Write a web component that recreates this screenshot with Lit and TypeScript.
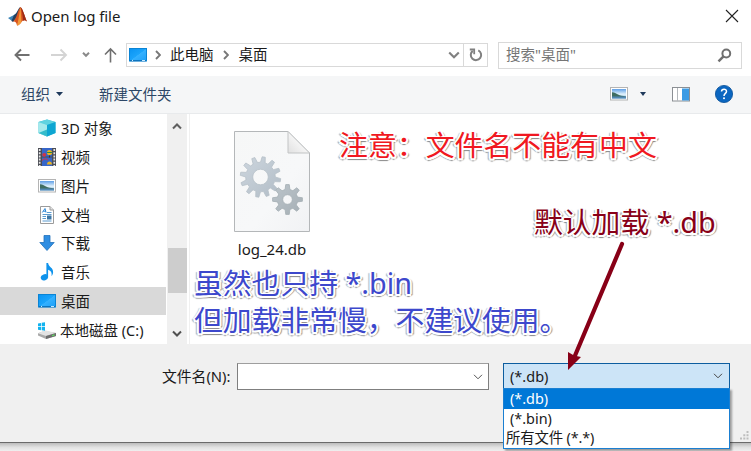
import { LitElement, html, svg, css } from "lit";
import { customElement } from "lit/decorators.js";
import { classMap } from "lit/directives/class-map.js";

/* Outline of a gear wheel with a round hole. */
function gear(cx: number, cy: number, teeth: number, outer: number, inner: number, hole: number, turn = 0): string {
  const pts: string[] = [];
  const step = (Math.PI * 2) / teeth;
  const at = (r: number, a: number) => `${(cx + r * Math.cos(a)).toFixed(2)} ${(cy + r * Math.sin(a)).toFixed(2)}`;
  for (let i = 0; i < teeth; i++) {
    const a = i * step + turn;
    pts.push(at(inner, a - step * 0.3), at(outer, a - step * 0.15), at(outer, a + step * 0.15), at(inner, a + step * 0.3));
  }
  return `M${pts.join("L")}Z M${cx - hole} ${cy}a${hole} ${hole} 0 1 0 ${hole * 2} 0a${hole} ${hole} 0 1 0 ${-hole * 2} 0Z`;
}

const monitor = svg`
  <defs><linearGradient id="mon" x1="0" y1="0" x2="1" y2="1">
    <stop offset="0" stop-color="#0a93f2"/><stop offset=".5" stop-color="#1ba4fb"/><stop offset=".52" stop-color="#35b1ff"/><stop offset="1" stop-color="#1c9ff8"/>
  </linearGradient></defs>
  <rect x=".5" y="2.5" width="17" height="12.500" fill="url(#mon)" stroke="#0b84d4"/>
  <path d="M1 14.700h16" stroke="#0c6db5" stroke-width="1"/><path d="M3 14.500h1M13 14.500h3" stroke="#c5e9ff"/>`;

const picture = svg`
  <defs><linearGradient id="sky" x1="0" y1="0" x2="0" y2="1">
    <stop offset="0" stop-color="#5f9fe6"/><stop offset=".55" stop-color="#e2f2fc"/><stop offset="1" stop-color="#8bbbe0"/>
  </linearGradient></defs>
  <rect x=".5" y="2.5" width="17" height="12.500" fill="#fff" stroke="#b4b4b4"/>
  <rect x="2" y="4" width="14" height="9.500" fill="url(#sky)"/>
  <path d="M2 7.2c2.5 0 4 1.2 6 2.3s5 1.3 8 2v.6H2z" fill="#3f6d62"/>
  <path d="M2 11.500h14v2H2z" fill="#5288b4"/>`;

const icons = {
  cube: svg`
    <path d="M9 .5l8.5 2.6v11L9 17.5.5 14.100V3.100z" fill="#3fc4d8"/>
    <path d="M.5 3.100L9 .5l8.500 2.600L9 6z" fill="#5fd3e0"/>
    <path d="M.5 3.100L9 6v11.500L.5 14.100z" fill="#a5eaec"/>
    <path d="M9 6l8.500-2.900v11L9 17.500z" fill="#0ea6d2"/>
    <path d="M.5 14.100L9 10.500v7z" fill="#35bccb"/>`,
  film: svg`
    <rect x="0" y="0" width="18" height="18" fill="#4b4d55"/>
    <rect x="4" y="0" width="10" height="8.500" fill="#3766c8"/><rect x="4" y="9.500" width="10" height="8.500" fill="#3766c8"/>
    <path d="M1.700 1v17M16.300 1v17" stroke="#e6e6e6" stroke-width="1.700" stroke-dasharray="2 1.200"/>
    <circle cx="11.500" cy="4.500" r="2.600" fill="#e9b320"/><path d="M9 4.500h5" stroke="#2c8b4c"/>
    <circle cx="6.200" cy="6.800" r="1.900" fill="#cf3547"/><path d="M11.500 7.500v2" stroke="#4a2c1c"/>
    <path d="M9 15.500a2.600 2.600 0 0 1 5 0v1H9z" fill="#e9b320"/><path d="M4 12.500l3-2 3 1.500" stroke="#cf3547" fill="none"/>`,
  picture,
  document: svg`
    <path d="M2.500.5h9.500l3.500 3.500v13.500h-13z" fill="#fff" stroke="#9b9b9b"/>
    <path d="M12 .5V4h3.500" fill="#e4e4e4" stroke="#9b9b9b"/>
    <path d="M4.300 6.500L7 2.500l1 4M5.300 5.200h2.500" stroke="#2c86d6" fill="none"/>
    <path d="M9 6.500h4.500M4.500 8.500h9M4.500 10.500h3.500M4.500 12.500h3.500M4.500 15h9" stroke="#5b9bd0"/>
    <rect x="9" y="9.500" width="4.500" height="4" fill="#3c76a5"/>`,
  download: svg`<path d="M6 1.500h6v7h4.200L9 16.500 1.800 8.500H6z" fill="#2f8ee2" stroke="#2272bd" stroke-width=".8"/>`,
  music: svg`
    <ellipse cx="6.400" cy="14.300" rx="3.700" ry="3" fill="#0f93ec" transform="rotate(-18 6.400 14.300)"/>
    <path d="M8.400 0h1.700c.3 4 5.400 4.500 5 9.500-.1 1.500-.8 2.800-1.600 3.600.6-3.100-.3-5.400-3.400-6.300v7.500H8.400z" fill="#0f93ec"/>`,
  monitor,
  drive: svg`
    <path d="M0 12.300L6.500 10l11.500 2v3L8 18 0 14.500z" fill="#a9a9a9"/>
    <path d="M0 12.300L7 9.300l11 2.700-10 2.900z" fill="#e3e3e3"/>
    <path d="M8 14.900l10-2.900v3L8 18z" fill="#6d6d6d"/><path d="M14 14.700l2.500-.8" stroke="#5fdc5f" stroke-width="1.200"/>
    <path d="M0 2.400l3-.5v3.300H0zM3.700 1.800L7 1.200v4H3.700zM0 5.900h3v3.300l-3-.5zM3.700 5.900H7v3.900l-3.300-.5z" fill="#12b3ef"/>`,
};

interface Place { icon: keyof typeof icons; label: string; selected?: boolean }
const places: Place[] = [
  { icon: "cube", label: "3D 对象" },
  { icon: "film", label: "视频" },
  { icon: "picture", label: "图片" },
  { icon: "document", label: "文档" },
  { icon: "download", label: "下载" },
  { icon: "music", label: "音乐" },
  { icon: "monitor", label: "桌面", selected: true },
  { icon: "drive", label: "本地磁盘 (C:)" },
];

const filters = [
  { label: "(*.db)", cls: "current" },
  { label: "(*.bin)", cls: "" },
  { label: "所有文件 (*.*)", cls: "all" },
];

@customElement("app-root")
export class AppRoot extends LitElement {
  static styles = css`
    :host {
      display: block; position: relative; width: 751px; height: 451px; overflow: hidden;
      background: #fff; color: #1a1a1a;
      font: 14.5px/20px "Noto Sans", "Noto Sans CJK SC", sans-serif;
    }
    * { box-sizing: border-box; }
    svg { display: block; flex: none; }
    .window { display: flex; flex-direction: column; height: 443px; border-bottom: 1px solid #6a6a6a; }
    .title { display: flex; align-items: center; height: 34px; padding: 0 12px 2px 8px; }
    .title span { flex: 1; margin-left: 4px; font-size: 15px; letter-spacing: -0.05px; }
    .nav { display: flex; align-items: center; height: 42px; padding: 0 9px 0 14px; }
    .address { display: flex; align-items: center; width: 362px; height: 24px; margin-left: 8px; border: 1px solid #d9d9d9; padding-left: 2px; }
    .address span, .search span { padding-bottom: 2px; }
    .address .sep { margin: 0 9px 0 8px; }
    .address .sep2 { margin: 0 10px 0 9px; }
    .address .fold { margin-left: auto; margin-right: 3px; }
    .refresh { display: flex; align-items: center; justify-content: center; width: 24px; height: 22px; border-left: 1px solid #d9d9d9; }
    .search { display: flex; align-items: center; justify-content: space-between; width: 244px; height: 27px; margin-left: auto; border: 1px solid #d9d9d9; padding: 0 9px 0 7px; color: #757575; }
    .tools { display: flex; align-items: center; height: 38px; padding: 0 18px 1px 21px; background: #f5f6f7; border-bottom: 1px solid #e8eaec; color: #2c4666; }
    .tools .down { margin-left: 6px; }
    .tools .new { margin-left: 36px; flex: 1; }
    .tools .down2 { margin: 0 26px 0 12px; }
    .tools .help { margin-left: 25px; }
    .main { display: flex; height: 230px; }
    .places { width: 166px; display: flex; flex-direction: column; }
    .place { display: flex; align-items: center; flex: 1; padding-left: 38px; gap: 5px; white-space: nowrap; }
    .place.selected { background: #d9d9d9; }
    .place.drive span { margin-left: -1px; }
    .scroll { display: flex; flex-direction: column; align-items: center; width: 20px; margin-left: 1px; background: #f0f0f0; padding: 8px 0 6px; }
    .thumb { width: 19px; height: 45px; margin: auto 0 37px; background: #cdcdcd; }
    .files { flex: 1; margin-left: 2px; border-left: 1px solid #f0f0f0; padding: 17px 0 0 30px; }
    .file { display: flex; flex-direction: column; align-items: center; width: 103px; }
    .file span { margin-top: 7px; font-size: 15px; margin-left: 1px; }
    .footer { display: flex; flex: 1; background: #f0f0f0; padding: 19px 0 0 162px; }
    .footer label { width: 75px; line-height: 27px; white-space: nowrap; font-size: 14.8px; }
    .name { display: flex; align-items: center; justify-content: flex-end; width: 252px; height: 27px; background: #fff; border: 1px solid #7f7f7f; border-top-color: #9e9e9e; padding-right: 5px; }
    .type { position: relative; width: 227px; height: 26px; margin-left: 14px; }
    .value { display: flex; align-items: center; justify-content: space-between; height: 26px; background: #cce4f7; border: 1px solid #0d5d9f; border-bottom: 0; padding: 0 6px 2px 6px; }
    .list { position: absolute; left: 0; top: 25px; width: 227px; height: 61px; background: #fff; border: 1px solid #1a7fd2; box-shadow: 2px 2px 2px rgba(0,0,0,.35); font-size: 14.4px; }
    .option { height: 19.600px; line-height: 20px; padding-left: 6px; }
    .option.current { background: #0078d7; color: #fff; }
    .option.all { padding-left: 2px; line-height: 19px; letter-spacing: -0.15px; }
    .grip { margin: auto 2px 2px auto; }
    .shade { height: 8px; background: linear-gradient(#bcbcbc, #e2e2e2 55%, #efefef); }
    .note { position: absolute; white-space: pre; font-size: 28.8px; line-height: 37px;
      text-shadow: 1px 0 #fff, -1px 0 #fff, 0 1px #fff, 0 -1px #fff, 1.500px 1.500px #fff, -1.500px 1.500px #fff, 2px 0 #fff, -2px 0 #fff, 0 2px #fff,
        2px 2px 1px #888, -2px 2px 1px #999, 0 3px 1px #888, 3px 1px 1px #aaa, -3px 1px 1px #bbb; }
    .red { left: 339px; top: 126px; color: #f01821; font-size: 28.9px; }
    .blue { left: 194px; top: 264px; color: #3d48cc; }
    .wine { left: 534px; top: 203px; color: #880017; }
    .arrow { position: absolute; left: 560px; top: 236px; }
  `;

  render() {
    return html`
      <div class="window">
        <div class="title">
          <svg width="19" height="19" viewBox="0 0 19 19">
            <path d="M0 11l6-3 4-3-4 8-2 1z" fill="#3d86b8"/><path d="M6 8c3-1 4-7 6.500-8L10 9l-5 6-1.500-1z" fill="#25405e"/>
            <path d="M12.500 0C15 2 16.500 9 19 14.500c-2.500-2-4-1.500-5.500.5-1.500 2-3 3.500-4.500 3.500C8.500 15 7 14 5 14.500 9 12 9.500 3 12.500 0z" fill="#d9541e"/>
            <path d="M12.500 0c-1 4-1 9-3.500 18.500 2 0 3.500-2 4.500-3.500z" fill="#f29a3a"/><path d="M12.500 0C15 2 16.500 9 19 14.500c-2-1.500-3-1.500-4-.6C15 9 14 4 12.500 0z" fill="#9c2a17"/>
          </svg>
          <span>Open log file</span>
          <svg width="14" height="14" viewBox="0 0 14 14"><path d="M1 1l12 12M13 1L1 13" stroke="#222" stroke-width="1.100"/></svg>
        </div>

        <div class="nav">
          <svg width="104" height="18" viewBox="0 0 104 18" fill="none">
            <path d="M15.500 9H1.500M7 3.500L1.500 9 7 14.500" stroke="#707070" stroke-width="1.900"/>
            <path d="M37 9h14M46.500 3.500L52 9l-5.500 5.500" stroke="#d4d4d4" stroke-width="1.900"/>
            <path d="M69 6.800l3 3 3-3" stroke="#8a8a8a" stroke-width="2"/>
            <path d="M96.500 16.500V3M91 8.500L96.500 3l5.500 5.500" stroke="#707070" stroke-width="1.600"/>
          </svg>
          <div class="address">
            <svg width="18" height="18" viewBox="0 0 18 18">${monitor}</svg>
            <svg class="sep" width="6" height="10" viewBox="0 0 6 10"><path d="M1 1l4 4-4 4" fill="none" stroke="#777" stroke-width="1.900"/></svg>
            <span>此电脑</span>
            <svg class="sep2" width="6" height="10" viewBox="0 0 6 10"><path d="M1 1l4 4-4 4" fill="none" stroke="#777" stroke-width="1.900"/></svg>
            <span>桌面</span>
            <svg class="fold" width="12" height="8" viewBox="0 0 12 8"><path d="M1.200 1.500L6 6.300l4.800-4.800" fill="none" stroke="#808080" stroke-width="2.100"/></svg>
            <div class="refresh">
              <svg width="14" height="14" viewBox="0 0 14 14" fill="none" stroke="#808080" stroke-width="2"><path d="M9.300 2.300a5.200 5.200 0 1 1-5.600.6"/><path d="M.8 1.500h4.400v4.700" stroke-width="1.800"/></svg>
            </div>
          </div>
          <div class="search">
            <span>搜索"桌面"</span>
            <svg width="15" height="15" viewBox="0 0 15 15" fill="none" stroke="#707070"><circle cx="9.300" cy="5.500" r="3.900" stroke-width="2"/><path d="M6.500 8.300L1.500 13.300" stroke-width="2.400"/></svg>
          </div>
        </div>

        <div class="tools">
          <span>组织</span>
          <svg class="down" width="7" height="4" viewBox="0 0 7 4"><path d="M0 0h7L3.500 4z" fill="#1e395b"/></svg>
          <span class="new">新建文件夹</span>
          <svg width="18" height="18" viewBox="0 0 18 18">${picture}</svg>
          <svg class="down2" width="6" height="4" viewBox="0 0 6 4"><path d="M0 0h6L3 4z" fill="#1e395b"/></svg>
          <svg width="18" height="15" viewBox="0 0 18 15"><rect x=".5" y=".5" width="17" height="13.500" fill="#fff" stroke="#8b8f94"/><path d="M5.500 1v13" stroke="#b4b8bc"/><rect x="10" y="1.500" width="7" height="12" fill="#3c9be4"/></svg>
          <svg class="help" width="18" height="18" viewBox="0 0 18 18"><circle cx="9" cy="9" r="8.600" fill="#0b66c0" stroke="#084f98" stroke-width=".8"/><path d="M6.500 6.500C6.600 3.300 11.600 3.400 11.500 6.500c0 1.900-2.500 2-2.500 4.500" fill="none" stroke="#fff" stroke-width="1.500"/><circle cx="9" cy="13.300" r="1" fill="#fff"/></svg>
        </div>

        <div class="main">
          <div class="places">
            ${places.map((p) => html`
              <div class=${classMap({ place: true, selected: !!p.selected, drive: p.icon === "drive" })}>
                <svg width="18" height="18" viewBox="0 0 18 18">${icons[p.icon]}</svg><span>${p.label}</span>
              </div>`)}
          </div>
          <div class="scroll">
            <svg width="10" height="8" viewBox="0 0 10 8"><path d="M1 6.500l4-4 4 4" fill="none" stroke="#606060" stroke-width="2"/></svg>
            <div class="thumb"></div>
            <svg width="10" height="8" viewBox="0 0 10 8"><path d="M1 1.500l4 4 4-4" fill="none" stroke="#505050" stroke-width="2"/></svg>
          </div>
          <div class="files">
            <div class="file">
              <svg width="76" height="101" viewBox="0 0 76 101">
                <defs>
                  <linearGradient id="page" x1="0" y1="0" x2="1" y2="1"><stop offset="0" stop-color="#f6f7f7"/><stop offset=".6" stop-color="#f7f8f9"/><stop offset="1" stop-color="#f1f2f4"/></linearGradient>
                  <linearGradient id="flap" x1="0" y1="1" x2="1" y2="0"><stop offset="0" stop-color="#e0e0e0"/><stop offset=".5" stop-color="#f5f5f5"/></linearGradient>
                  <linearGradient id="g1" x1="0" y1="0" x2="1" y2="1"><stop offset="0" stop-color="#cdd6de"/><stop offset="1" stop-color="#b2bdc7"/></linearGradient>
                  <linearGradient id="g2" x1="0" y1="0" x2="1" y2="1"><stop offset="0" stop-color="#bcc5cb"/><stop offset="1" stop-color="#a6afb5"/></linearGradient>
                </defs>
                <path d="M.5.5h53.500l21.500 21.500v78.500H.5z" fill="url(#page)" stroke="#b4b7b9"/>
                <path d="M54 .5V22h21.500z" fill="url(#flap)" stroke="#c2c4c5"/>
                <path d=${gear(26.500, 46, 12, 20.300, 14.800, 7.800, 0.16)} fill="url(#g1)" stroke="#b6c0c8" stroke-width=".8" fill-rule="evenodd" stroke-linejoin="round"/>
                <path d=${gear(53.500, 68.500, 8, 15, 10.300, 4.800)} fill="url(#g2)" stroke="#a5aeb4" stroke-width=".8" fill-rule="evenodd" stroke-linejoin="round"/>
              </svg>
              <span>log_24.db</span>
            </div>
          </div>
        </div>

        <div class="footer">
          <label>文件名(N):</label>
          <div class="name"><svg width="10" height="6" viewBox="0 0 10 6"><path d="M1 .8l4 4 4-4" fill="none" stroke="#555"/></svg></div>
          <div class="type">
            <div class="value"><span>(*.db)</span><svg width="10" height="6" viewBox="0 0 10 6"><path d="M1 .8l4 4 4-4" fill="none" stroke="#444"/></svg></div>
            <div class="list">${filters.map((f) => html`<div class="option ${f.cls}">${f.label}</div>`)}</div>
          </div>
          <svg class="grip" width="9" height="9" viewBox="0 0 9 9" fill="#bdbdbd"><path d="M6.500 0h2v2h-2zM3.300 3.300h2v2h-2zM6.500 3.300h2v2h-2zM0 6.600h2v2H0zM3.300 6.600h2v2h-2zM6.500 6.600h2v2h-2z"/></svg>
        </div>
      </div>
      <div class="shade"></div>

      <div class="note red">注意：文件名不能有中文</div>
      <div class="note blue">虽然也只持 *.bin
但加载非常慢，不建议使用。</div>
      <div class="note wine">默认加载 *.db</div>
      <svg class="arrow" width="70" height="140" viewBox="0 0 70 140">
        <path d="M62 8L14 122" stroke="#880017" stroke-width="4.200" stroke-linecap="round"/>
        <path d="M8 134V116l6 3.500 7 1.500z" fill="#880017"/>
      </svg>
    `;
  }
}
